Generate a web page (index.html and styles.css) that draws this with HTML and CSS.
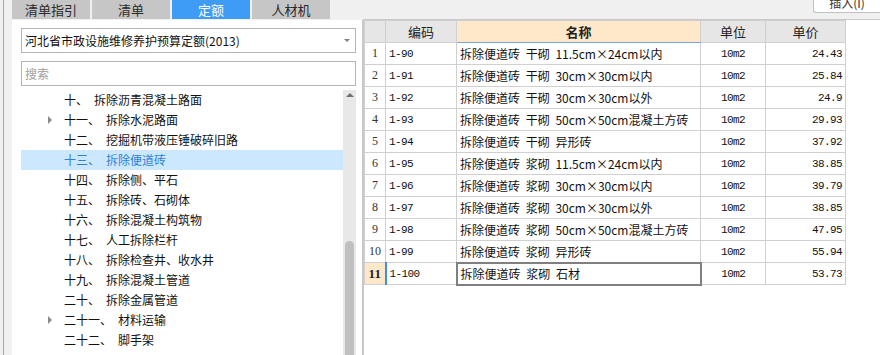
FILE: index.html
```html
<!DOCTYPE html>
<html lang="zh-CN">
<head>
  <meta charset="UTF-8">
  <title>定额</title>
  <link rel="stylesheet" href="styles.css">
</head>
<body>
  <div class="left-pane">
    <div class="left-frame">
      <div class="tabs">
        <div class="tab">清单指引</div>
        <div class="tab">清单</div>
        <div class="tab active">定额</div>
        <div class="tab">人材机</div>
      </div>
      <div class="panel">
        <div class="select">
          <span>河北省市政设施维修养护预算定额(2013)</span>
          <span class="select-arrow"></span>
        </div>
        <div class="search">搜索</div>
        <div class="tree-wrap">
          <ul class="tree">
            <li><span class="num">十、</span>拆除沥青混凝土路面</li>
            <li class="has-child"><span class="num">十一、</span>拆除水泥路面</li>
            <li><span class="num">十二、</span>挖掘机带液压锤破碎旧路</li>
            <li class="selected"><span class="num">十三、</span>拆除便道砖</li>
            <li><span class="num">十四、</span>拆除侧、平石</li>
            <li><span class="num">十五、</span>拆除砖、石砌体</li>
            <li><span class="num">十六、</span>拆除混凝土构筑物</li>
            <li><span class="num">十七、</span>人工拆除栏杆</li>
            <li><span class="num">十八、</span>拆除检查井、收水井</li>
            <li><span class="num">十九、</span>拆除混凝土管道</li>
            <li><span class="num">二十、</span>拆除金属管道</li>
            <li class="has-child"><span class="num">二十一、</span>材料运输</li>
            <li><span class="num">二十二、</span>脚手架</li>
          </ul>
          <div class="scrollbar">
            <div class="scroll-up"></div>
            <div class="scroll-thumb"></div>
          </div>
        </div>
      </div>
    </div>
  </div>

  <div class="right-pane">
    <div class="toolbar">
      <div class="btn">插入(I)</div>
    </div>
    <div class="grid">
      <table>
        <colgroup>
          <col class="c-idx"><col class="c-code"><col class="c-name"><col class="c-unit"><col class="c-price">
        </colgroup>
        <thead>
          <tr>
            <th class="idx"></th>
            <th>编码</th>
            <th class="sorted">名称</th>
            <th>单位</th>
            <th>单价</th>
          </tr>
        </thead>
        <tbody>
          <tr><td class="idx">1</td><td class="code">1-90</td><td class="name">拆除便道砖 干砌 11.5cm×24cm以内</td><td class="unit">10m2</td><td class="price">24.43</td></tr>
          <tr><td class="idx">2</td><td class="code">1-91</td><td class="name">拆除便道砖 干砌 30cm×30cm以内</td><td class="unit">10m2</td><td class="price">25.84</td></tr>
          <tr><td class="idx">3</td><td class="code">1-92</td><td class="name">拆除便道砖 干砌 30cm×30cm以外</td><td class="unit">10m2</td><td class="price">24.9</td></tr>
          <tr><td class="idx">4</td><td class="code">1-93</td><td class="name">拆除便道砖 干砌 50cm×50cm混凝土方砖</td><td class="unit">10m2</td><td class="price">29.93</td></tr>
          <tr><td class="idx">5</td><td class="code">1-94</td><td class="name">拆除便道砖 干砌 异形砖</td><td class="unit">10m2</td><td class="price">37.92</td></tr>
          <tr><td class="idx">6</td><td class="code">1-95</td><td class="name">拆除便道砖 浆砌 11.5cm×24cm以内</td><td class="unit">10m2</td><td class="price">38.85</td></tr>
          <tr><td class="idx">7</td><td class="code">1-96</td><td class="name">拆除便道砖 浆砌 30cm×30cm以内</td><td class="unit">10m2</td><td class="price">39.79</td></tr>
          <tr><td class="idx">8</td><td class="code">1-97</td><td class="name">拆除便道砖 浆砌 30cm×30cm以外</td><td class="unit">10m2</td><td class="price">38.85</td></tr>
          <tr><td class="idx">9</td><td class="code">1-98</td><td class="name">拆除便道砖 浆砌 50cm×50cm混凝土方砖</td><td class="unit">10m2</td><td class="price">47.95</td></tr>
          <tr><td class="idx">10</td><td class="code">1-99</td><td class="name">拆除便道砖 浆砌 异形砖</td><td class="unit">10m2</td><td class="price">55.94</td></tr>
          <tr class="current"><td class="idx">11</td><td class="code">1-100</td><td class="name focus">拆除便道砖 浆砌 石材</td><td class="unit">10m2</td><td class="price">53.73</td></tr>
        </tbody>
      </table>
    </div>
  </div>
</body>
</html>
```

FILE: styles.css
```css
html, body {
  margin: 0;
  height: 355px;
  overflow: hidden;
}
body {
  display: flex;
  font-family: "Noto Sans CJK SC", "Noto Sans", sans-serif;
  font-size: 12px;
  color: #000;
  background-color: #f0f0f0;
}

/* 左側 */
.left-pane {
  width: 363px;
  padding-left: 3px;
  box-sizing: border-box;
  flex-shrink: 0;
}
.left-frame {
  height: 100%;
  border-left: 1px solid #a8a8a8;
  padding-left: 8px;
  display: flex;
  flex-direction: column;
}
.tabs {
  display: flex;
  gap: 2px;
  height: 20px;
}
.tab {
  width: 78px;
  height: 19px;
  line-height: 19px;
  text-align: center;
  background-color: #c6c6c6;
  color: #2a2a2a;
  font-size: 13px;
}
.tab.active {
  background-color: #3f9cf6;
  color: #fff;
}
.panel {
  flex: 1;
  background-color: #fff;
  border-right: 1px solid #c8c8c8;
  padding: 8px 6px 0 9px;
}
.select {
  height: 25px;
  box-sizing: border-box;
  border: 1px solid #b4b4b4;
  display: flex;
  align-items: center;
  justify-content: space-between;
  padding: 0 5px 0 3px;
  font-size: 12px;
  color: #111;
}
.select-arrow {
  width: 0;
  height: 0;
  border-left: 3px solid transparent;
  border-right: 3px solid transparent;
  border-top: 3px solid #808080;
}
.search {
  margin-top: 8px;
  height: 25px;
  box-sizing: border-box;
  border: 1px solid #b4b4b4;
  line-height: 23px;
  padding-left: 3px;
  color: #a0a0a0;
}
.tree-wrap {
  margin-top: 4px;
  display: flex;
  height: 265px;
}
.tree {
  list-style: none;
  margin: 0;
  padding: 0;
  flex: 1;
}
.tree li {
  position: relative;
  height: 20px;
  line-height: 20px;
  padding-left: 43px;
  color: #111;
  white-space: nowrap;
}
.tree .num {
  margin-right: 6px;
}
.tree li.selected {
  background-color: #cce8ff;
  color: #2f7fd8;
}
.tree li.has-child::before {
  content: "";
  position: absolute;
  left: 27px;
  top: 6px;
  border-top: 4px solid transparent;
  border-bottom: 4px solid transparent;
  border-left: 4px solid #8c8c8c;
}
.scrollbar {
  width: 13px;
  background-color: #e8e8e8;
  display: flex;
  flex-direction: column;
  align-items: center;
}
.scroll-up {
  margin-top: 3px;
  width: 0;
  height: 0;
  border-left: 4px solid transparent;
  border-right: 4px solid transparent;
  border-bottom: 4px solid #707070;
}
.scroll-thumb {
  margin-top: 144px;
  width: 9px;
  flex: 1;
  background-color: #c0c0c0;
  border-radius: 5px 5px 0 0;
}

/* 右側 */
.right-pane {
  flex: 1;
  display: flex;
  flex-direction: column;
}
.toolbar {
  height: 19px;
  border-bottom: 1px solid #c8c8c8;
  display: flex;
  justify-content: flex-end;
  align-items: flex-start;
}
.btn {
  margin-top: -8px;
  width: 67px;
  height: 21px;
  line-height: 20px;
  box-sizing: border-box;
  border: 1px solid #c0c0c0;
  border-right: none;
  border-radius: 0 0 0 3px;
  background-color: #fff;
  text-align: center;
  color: #333;
  font-size: 12px;
}
.grid {
  flex: 1;
  background-color: #fff;
  border-left: 1px solid #c8c8c8;
}
table {
  border-collapse: collapse;
  table-layout: fixed;
  width: 481px;
}
.c-idx { width: 21px; }
.c-code { width: 71px; }
.c-name { width: 244px; }
.c-unit { width: 65px; }
.c-price { width: 80px; }
th, td {
  border: 1px solid #d0d0d0;
  height: 22px;
  padding: 0 3px;
  white-space: nowrap;
  overflow: hidden;
  box-sizing: border-box;
}
th {
  background-color: #e6e6e6;
  font-weight: normal;
  font-size: 13px;
  color: #222;
  text-align: center;
}
th.sorted {
  background-color: #ffe7c9;
  font-weight: bold;
  border-bottom: 1px solid #78a6e2;
}
td {
  font-size: 12px;
  color: #111;
}
td.name {
  word-spacing: 3px;
}
td.idx {
  padding: 0;
  text-align: center;
  font-family: "Liberation Serif", serif;
  font-size: 12px;
  color: #333;
}
.code, .price, .unit {
  font-family: "Liberation Mono", monospace;
  font-size: 11px;
  letter-spacing: -0.6px;
}
.unit {
  text-align: center;
}
.price {
  text-align: right;
}
tr.current td.idx {
  background-color: #ffe7c9;
  font-weight: bold;
  font-size: 13px;
  color: #222;
  border-right: 2px solid #3d8ee8;
}
td.focus {
  border: 2px solid #808080;
}
```
